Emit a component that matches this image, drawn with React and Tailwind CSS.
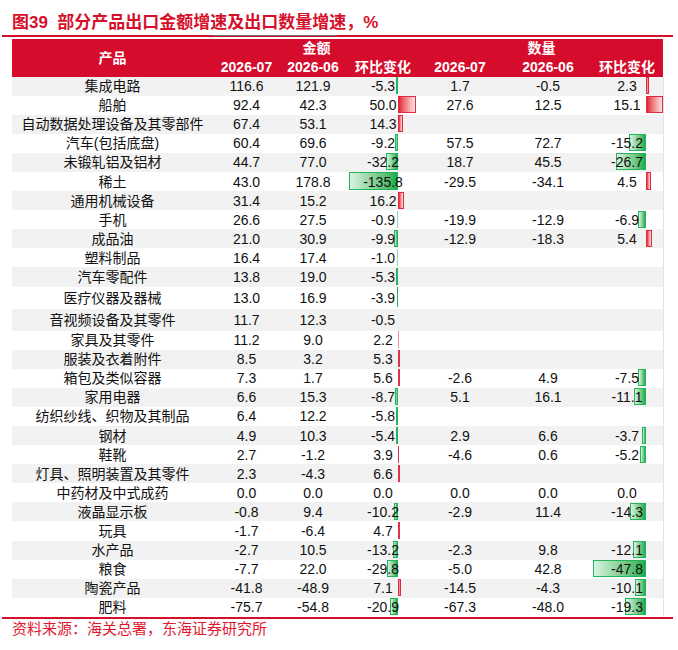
import React from "react";

const rows = [
  ["集成电路", 116.6, 121.9, -5.3, 1.7, -0.5, 2.3],
  ["船舶", 92.4, 42.3, 50.0, 27.6, 12.5, 15.1],
  ["自动数据处理设备及其零部件", 67.4, 53.1, 14.3, null, null, null],
  ["汽车(包括底盘)", 60.4, 69.6, -9.2, 57.5, 72.7, -15.2],
  ["未锻轧铝及铝材", 44.7, 77.0, -32.2, 18.7, 45.5, -26.7],
  ["稀土", 43.0, 178.8, -135.8, -29.5, -34.1, 4.5],
  ["通用机械设备", 31.4, 15.2, 16.2, null, null, null],
  ["手机", 26.6, 27.5, -0.9, -19.9, -12.9, -6.9],
  ["成品油", 21.0, 30.9, -9.9, -12.9, -18.3, 5.4],
  ["塑料制品", 16.4, 17.4, -1.0, null, null, null],
  ["汽车零配件", 13.8, 19.0, -5.3, null, null, null],
  ["医疗仪器及器械", 13.0, 16.9, -3.9, null, null, null],
  ["音视频设备及其零件", 11.7, 12.3, -0.5, null, null, null],
  ["家具及其零件", 11.2, 9.0, 2.2, null, null, null],
  ["服装及衣着附件", 8.5, 3.2, 5.3, null, null, null],
  ["箱包及类似容器", 7.3, 1.7, 5.6, -2.6, 4.9, -7.5],
  ["家用电器", 6.6, 15.3, -8.7, 5.1, 16.1, -11.1],
  ["纺织纱线、织物及其制品", 6.4, 12.2, -5.8, null, null, null],
  ["钢材", 4.9, 10.3, -5.4, 2.9, 6.6, -3.7],
  ["鞋靴", 2.7, -1.2, 3.9, -4.6, 0.6, -5.2],
  ["灯具、照明装置及其零件", 2.3, -4.3, 6.6, null, null, null],
  ["中药材及中式成药", 0.0, 0.0, 0.0, 0.0, 0.0, 0.0],
  ["液晶显示板", -0.8, 9.4, -10.2, -2.9, 11.4, -14.3],
  ["玩具", -1.7, -6.4, 4.7, null, null, null],
  ["水产品", -2.7, 10.5, -13.2, -2.3, 9.8, -12.1],
  ["粮食", -7.7, 22.0, -29.8, -5.0, 42.8, -47.8],
  ["陶瓷产品", -41.8, -48.9, 7.1, -14.5, -4.3, -10.1],
  ["肥料", -75.7, -54.8, -20.9, -67.3, -48.0, -19.3],
];

const fmt = (v) => (v === null || v === undefined ? "" : v.toFixed(1));

function Bar({ v, axis, scale }) {
  if (v === null || v === 0) return null;
  const raw = Math.abs(v) * scale;
  if (raw < 0.25) return null;
  const w = Math.max(raw, 1);
  const pos = v > 0;
  const style = { left: pos ? axis : axis - w, width: w };
  let cls;
  if (w >= 2.5) {
    cls = pos
      ? "absolute top-[0.5px] bottom-[1.5px] box-border border border-[#e02a41] bg-linear-to-r from-[#dc1c39] to-[#fbe4e7]"
      : "absolute top-[0.5px] bottom-[1.5px] box-border border border-[#22b55b] bg-linear-to-r from-[#d8f3e1] to-[#0fad4c]";
  } else if (raw < 1) {
    cls = pos
      ? "absolute top-[0.5px] bottom-[1.5px] bg-[#f08d9b]"
      : "absolute top-[0.5px] bottom-[1.5px] bg-[#8fd9ab]";
  } else {
    cls = pos
      ? "absolute top-[0.5px] bottom-[1.5px] bg-[#e0324a]"
      : "absolute top-[0.5px] bottom-[1.5px] bg-[#26b35d]";
  }
  return <div className={cls} style={style} />;
}

function Row({ r, i }) {
  const tall = i === 11 || i === 12;
  const bg = i % 2 === 0 ? "bg-[#f2f2f2]" : "bg-white";
  const h = tall ? "h-[22px]" : "h-[19.1px]";
  return (
    <div
      className={`grid grid-cols-[201px_67px_66px_74px_80px_96px_67px] items-center ${h} ${bg}`}
    >
      <div className="text-center whitespace-nowrap">{r[0]}</div>
      <div className="text-center">{fmt(r[1])}</div>
      <div className="text-center">{fmt(r[2])}</div>
      <div className="relative h-full flex items-center justify-center">
        <Bar v={r[3]} axis={52} scale={0.361} />
        <span className="relative z-10">{fmt(r[3])}</span>
      </div>
      <div className="text-center">{fmt(r[4])}</div>
      <div className="text-center">{fmt(r[5])}</div>
      <div className="relative h-full flex items-center justify-center pr-[5px]">
        <Bar v={r[6]} axis={50} scale={1.11} />
        <span className="relative z-10">{fmt(r[6])}</span>
      </div>
    </div>
  );
}

export default function App() {
  return (
    <div className="w-[678px] h-[650px] bg-white font-['Liberation_Sans','Noto_Sans_CJK_SC',sans-serif] text-[#111]">
      <div className="h-[35px] pl-[12px] pt-[12px] text-[17px] leading-[22px] font-bold text-[#d6102b] whitespace-nowrap">
        图39&nbsp;&nbsp;部分产品出口金额增速及出口数量增速，%
      </div>
      <div className="flex ml-[2px] w-[671px] h-[2px]">
        <div className="w-[211px] bg-[#d6102b]" />
        <div className="w-[124px] flex flex-col">
          <div className="h-[1px] bg-[#707070]" />
          <div className="h-[1px] bg-[#d6102b]" />
        </div>
        <div className="flex-1 bg-[#d6102b]" />
      </div>
      <div className="ml-[12px] mt-[1.5px] w-[652px]">
        <div className="grid grid-cols-[201px_67px_66px_74px_80px_96px_67px] grid-rows-[19px_19px] w-[651px] bg-[#d50c2c] text-white font-bold text-[14px] leading-none">
          <div className="row-span-2 flex items-center justify-center">产品</div>
          <div className="col-span-3 flex items-center justify-center">金额</div>
          <div className="col-span-3 flex items-center justify-center">数量</div>
          <div className="flex items-center justify-center">2026-07</div>
          <div className="flex items-center justify-center">2026-06</div>
          <div className="flex items-center justify-center">环比变化</div>
          <div className="flex items-center justify-center">2026-07</div>
          <div className="flex items-center justify-center">2026-06</div>
          <div className="flex items-center justify-center pr-[5px]">环比变化</div>
        </div>
        <div className="border-r border-[#e3e3e3] text-[14px] leading-none">
          {rows.map((r, i) => (
            <Row key={i} r={r} i={i} />
          ))}
        </div>
      </div>
      <div className="ml-[2px] w-[671px] h-[2px] bg-[#d6102b]" />
      <div className="pl-[12px] text-[15px] leading-[20px] text-[#e0162e] whitespace-nowrap">
        资料来源：海关总署，东海证券研究所
      </div>
    </div>
  );
}
